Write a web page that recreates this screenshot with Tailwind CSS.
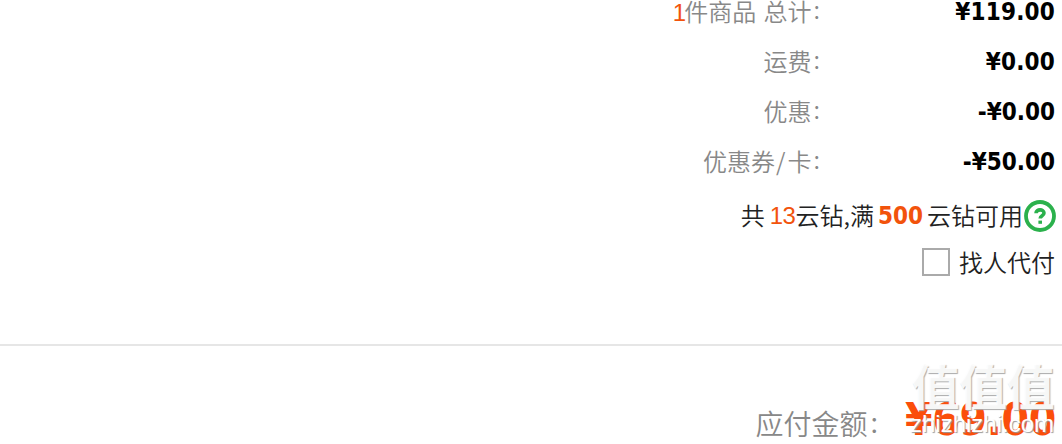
<!doctype html>
<html lang="zh-CN">
<head>
    <meta charset="UTF-8" />
    <meta name="viewport" content="width=device-width, initial-scale=1.0" />
    <script src="https://cdn.jsdelivr.net/npm/@tailwindcss/browser@4"></script>
    <title>订单结算</title>
</head>
<body class="relative h-[444px] overflow-hidden bg-white font-['Noto_Sans_CJK_SC',sans-serif] text-[24px] leading-none text-[#222]">
    <!-- 金额明细 -->
    <section class="flex flex-col pr-[7px] text-[#888] font-[350]">
        <div class="flex h-[37px] items-start justify-end">
            <p class="-mt-[1px] whitespace-nowrap"><span class="font-['Liberation_Sans',sans-serif] tracking-[-2px] text-[#f2530c]">1</span>件商品<span class="ml-[2px]"></span> 总计<span class="relative -top-[2px] ml-[2px]">:</span></p>
            <p class="w-[235px] text-right font-['DejaVu_Sans_Condensed','DejaVu_Sans',sans-serif] font-bold tracking-[0.2px] text-black">¥119.00</p>
        </div>
        <div class="flex h-[50px] items-center justify-end">
            <p class="-mt-[2px] whitespace-nowrap">运费<span class="relative -top-[2px] ml-[2px]">:</span></p>
            <p class="w-[235px] text-right font-['DejaVu_Sans_Condensed','DejaVu_Sans',sans-serif] font-bold tracking-[0.2px] text-black">¥0.00</p>
        </div>
        <div class="flex h-[50px] items-center justify-end">
            <p class="-mt-[2px] whitespace-nowrap">优惠<span class="relative -top-[2px] ml-[2px]">:</span></p>
            <p class="w-[235px] text-right font-['DejaVu_Sans_Condensed','DejaVu_Sans',sans-serif] font-bold text-black">-¥0.00</p>
        </div>
        <div class="flex h-[50px] items-center justify-end">
            <p class="-mt-[2px] whitespace-nowrap">优惠券<span class="mr-[2px] ml-[1px]">/</span>卡<span class="relative -top-[2px] ml-[2px]">:</span></p>
            <p class="w-[235px] text-right font-['DejaVu_Sans_Condensed','DejaVu_Sans',sans-serif] font-bold text-black">-¥50.00</p>
        </div>
    </section>

    <!-- 云钻 / 代付 -->
    <section class="pr-[7px] font-[350]">
        <div class="-mr-[1px] flex h-[57px] items-center justify-end whitespace-nowrap">
            <span class="-mt-[2px]">共</span>
            <span class="ml-[5px] font-['Liberation_Sans',sans-serif] tracking-[-0.5px] text-[#f2530c]">13</span>
            <span class="-mt-[2px]">云钻,满</span>
            <span class="ml-[4px] font-['DejaVu_Sans_Condensed','DejaVu_Sans',sans-serif] font-bold text-[#f2530c]">500</span>
            <span class="-mt-[2px] ml-[4px] mr-[1px]">云钻可用</span>
            <svg class="h-8 w-8" viewBox="0 0 32 32" fill="none">
                <circle cx="16" cy="16" r="14" stroke="#2bb14c" stroke-width="3.8" />
                <path d="M12 13.2C12 8.8 20 8.8 20 13C20 16 16.2 15.5 16.2 18.6" stroke="#2bb14c" stroke-width="3.6" />
                <rect x="14.4" y="20.6" width="3.6" height="3.2" fill="#2bb14c" />
            </svg>
        </div>
        <label class="flex h-9 items-center justify-end">
            <span class="h-7 w-7 border-2 border-[#aaa] bg-white"></span>
            <span class="ml-[9px]">找人代付</span>
        </label>
    </section>

    <!-- 应付金额 -->
    <section class="mt-[64px] flex h-[99px] items-start justify-end border-t-2 border-[#e6e6e6] pt-[52px] pr-[6px]">
        <p class="pt-[11px] text-[28px] font-[350] text-[#888]">应付金额<span class="relative -top-[2px] ml-[3px]">:</span></p>
        <p class="w-[178px] text-right font-['DejaVu_Sans_Condensed','DejaVu_Sans',sans-serif] text-[44px] font-bold tracking-[-0.3px] text-[#fb4e0a]">¥69.00</p>
    </section>

    <!-- 水印 -->
    <div class="absolute top-[360px] right-[8px] text-right text-white">
        <p class="text-[48px] leading-[48px] font-bold tracking-[-0.5px] text-white/90 [text-shadow:1px_1px_1px_#aaa]">值值值</p>
        <p class="mt-[2px] font-['Liberation_Sans',sans-serif] text-[24px] leading-[28px] [text-shadow:1px_1px_1px_#999]">zhizhizhi.com</p>
    </div>
</body>
</html>
